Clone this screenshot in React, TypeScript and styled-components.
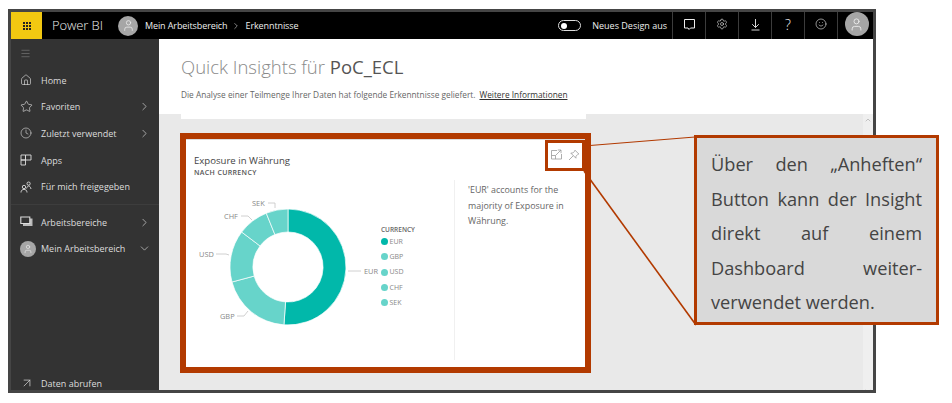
import React from 'react';
import styled, { createGlobalStyle } from 'styled-components';
import { ChevronDown, ChevronRight, ChevronUp, Clock, House, Menu, Settings, Smile, Star, User, ArrowUpRight } from 'lucide-react';

const RED = '#b23a00';
const FONT = '"Open Sans", "Noto Sans", "Liberation Sans", sans-serif';

const GlobalStyle = createGlobalStyle`
  html, body {
    margin: 0;
    background: #fff;
    font-family: ${FONT};
  }
  * { box-sizing: border-box; }
`;

const Page = styled.div`
  position: relative;
  width: 952px;
  height: 403px;
  padding: 9px 0 0 8px;
  overflow: hidden;
`;

const Window = styled.div`
  width: 868px;
  height: 384px;
  border: 3px solid #454545;
  display: flex;
  flex-direction: column;
`;

const TopBar = styled.header`
  height: 27px;
  background: #000;
  color: #eee;
  display: flex;
  align-items: stretch;
  flex-shrink: 0;
`;

const AppTile = styled.div`
  width: 31px;
  background: #f2c811;
  display: grid;
  place-items: center;
`;

const Waffle = styled.div`
  display: grid;
  grid-template-columns: repeat(3, 2px);
  gap: 1px;
  span { width: 2px; height: 2px; background: #222; }
`;

const Brand = styled.div`
  margin-left: 10px;
  width: 50px;
  font-size: 13px;
  font-weight: 300;
  line-height: 26px;
  letter-spacing: -0.1px;
  white-space: nowrap;
`;

const Avatar = styled.div<{ $size: number }>`
  width: ${(p) => p.$size}px;
  height: ${(p) => p.$size}px;
  border-radius: 50%;
  background: #a6a6a6;
  color: #eee;
  display: grid;
  place-items: center;
  flex-shrink: 0;
`;

const Crumbs = styled.div`
  margin-left: 16px;
  display: flex;
  align-items: center;
  gap: 4px;
  font-size: 9px;
  white-space: nowrap;
  letter-spacing: -0.1px;
  flex: 1;
`;

const CrumbWorkspace = styled.div`
  display: flex;
  align-items: center;
  gap: 7px;
`;

const DesignToggle = styled.div`
  display: flex;
  align-items: center;
  gap: 11px;
  margin-right: 5px;
  font-size: 9px;
  white-space: nowrap;
`;

const ToggleTrack = styled.div`
  width: 23px;
  height: 11px;
  border: 1px solid #ddd;
  border-radius: 6px;
  padding: 1.5px;
  span { display: block; width: 6px; height: 6px; border-radius: 50%; background: #fff; }
`;

const BarCell = styled.div`
  width: 33px;
  border-left: 1px solid #3c3c3c;
  display: grid;
  place-items: center;
  color: #eee;
  padding-bottom: 3px;
  font-size: 14px;
  font-weight: 300;
`;

const UserCell = styled(BarCell)`
  width: 36px;
  align-content: start;
  padding-left: 2px;
  padding-bottom: 0;
`;

const Body = styled.div`
  flex: 1;
  display: flex;
  min-height: 0;
`;

const Sidebar = styled.nav`
  width: 148px;
  background: #333;
  color: #ddd;
  display: flex;
  flex-direction: column;
  font-size: 9px;
  flex-shrink: 0;
`;

const MenuToggle = styled.div`
  height: 28px;
  padding: 1px 0 0 9px;
  display: flex;
  align-items: center;
  color: #999;
`;

const NavRow = styled.div`
  height: 26.6px;
  display: flex;
  align-items: center;
  padding-left: 9px;
  padding-right: 8px;
  white-space: nowrap;
`;

const NavIcon = styled.span`
  width: 21px;
  display: flex;
  align-items: center;
  flex-shrink: 0;
`;

const NavLabel = styled.span`
  flex: 1;
`;

const NavDivider = styled.div`
  height: 1px;
  background: #3d3d3d;
  margin: 4px 0 4px;
`;

const NavSpacer = styled.div`
  flex: 1;
`;

const BottomRow = styled(NavRow)`
  height: 14px;
`;

const Main = styled.main`
  flex: 1;
  display: flex;
  flex-direction: column;
  min-width: 0;
`;

const InsightHeader = styled.section`
  height: 75px;
  background: #fff;
  padding: 14px 0 0 22px;
  flex-shrink: 0;
`;

const Title = styled.h1`
  margin: 0;
  font-size: 18.5px;
  font-weight: 300;
  line-height: 28px;
  color: #8a8a8a;
  white-space: nowrap;
  strong { font-weight: 400; color: #555; }
`;

const Subtitle = styled.p`
  margin: 8px 0 0;
  font-size: 8.3px;
  line-height: 11px;
  color: #666;
  white-space: nowrap;
  a { margin-left: 4px; color: #333; text-decoration: underline; }
`;

const Workspace = styled.div`
  flex: 1;
  display: flex;
  background: #e9e9e9;
  min-height: 0;
`;

const CardArea = styled.div`
  flex: 1;
`;

const Strip = styled.div`
  width: 405px;
  height: 5px;
  margin-left: 22px;
  background: #fff;
`;

const Card = styled.article`
  position: relative;
  width: 411px;
  height: 240px;
  margin: 14px 0 0 21px;
  border: 6px solid ${RED};
  background: #fff;
  display: flex;
  box-shadow: inset 0 1px 0 #ddd;
`;

const ChartPane = styled.div`
  width: 268px;
  padding: 15px 0 0 8px;
`;

const CardTitle = styled.h2`
  margin: 0;
  font-size: 9.6px;
  font-weight: 400;
  line-height: 13px;
  color: #444;
  white-space: nowrap;
`;

const CardSub = styled.div`
  margin-top: 1px;
  font-size: 7px;
  font-weight: 600;
  line-height: 9px;
  letter-spacing: 0.35px;
  color: #555;
`;

const ChartRow = styled.div`
  display: flex;
  align-items: flex-start;
  margin: -5px 0 0 -8px;
`;

const Legend = styled.div`
  margin: 54px 0 0 -7px;
  font-size: 7px;
  line-height: 15.2px;
  color: #888;
`;

const LegendTitle = styled.div`
  font-weight: 600;
  font-size: 6.5px;
  line-height: 8px;
  color: #666;
`;

const LegendItem = styled.div`
  display: flex;
  align-items: center;
  gap: 1.5px;
`;

const LegendDot = styled.span<{ $color: string }>`
  width: 7px;
  height: 7px;
  border-radius: 50%;
  background: ${(p) => p.$color};
`;

const NotePane = styled.div`
  margin-top: 41px;
  height: 180px;
  border-left: 1px solid #f0f0f0;
  padding: 2px 0 0 13px;
  font-size: 8.9px;
  line-height: 15.5px;
  color: #666;
  width: 128px;
`;

const NoteText = styled.p`
  margin: 0;
`;

const ActionBox = styled.div`
  position: absolute;
  left: 359px;
  top: 1px;
  width: 40px;
  height: 31px;
  border: 3px solid ${RED};
  display: flex;
  align-items: center;
  justify-content: center;
  gap: 6px;
  color: #999;
  padding-bottom: 2px;
`;

const Scrollbar = styled.div`
  width: 10px;
  background: #efefef;
  color: #999;
  display: flex;
  flex-direction: column;
  align-items: center;
  justify-content: space-between;
  padding-top: 2px;
  overflow: hidden;
`;

const Callout = styled.aside`
  position: absolute;
  left: 694px;
  top: 135px;
  width: 245px;
  height: 190px;
  border: 3px solid ${RED};
  background: #d9d9d9;
  color: #444;
  padding: 9px 14px 0;
  font-size: 18.2px;
  line-height: 34.5px;
`;

const CalloutLine = styled.div<{ $last?: boolean }>`
  text-align: justify;
  text-align-last: ${(p) => (p.$last ? 'left' : 'justify')};
`;

const Leaders = styled.svg`
  position: absolute;
  left: 0;
  top: 0;
  pointer-events: none;
`;

const slices = [
  { name: 'EUR', from: 0, to: 184, color: '#01b8aa' },
  { name: 'GBP', from: 184, to: 255, color: '#67d4ca' },
  { name: 'USD', from: 255, to: 307, color: '#67d4ca' },
  { name: 'CHF', from: 307, to: 338, color: '#67d4ca' },
  { name: 'SEK', from: 338, to: 360, color: '#67d4ca' },
];

const polar = (r: number, deg: number) => {
  const a = ((deg - 90) * Math.PI) / 180;
  return `${(100 + r * Math.cos(a)).toFixed(2)} ${(95 + r * Math.sin(a)).toFixed(2)}`;
};

const slicePath = (from: number, to: number) => {
  const large = to - from > 180 ? 1 : 0;
  return `M${polar(58, from)} A58 58 0 ${large} 1 ${polar(58, to)} L${polar(35, to)} A35 35 0 ${large} 0 ${polar(35, from)} Z`;
};

const Donut = () => (
  <svg width="200" height="190" viewBox="0 0 200 190" style={{ flexShrink: 0, marginLeft: 2 }}>
    {slices.map((s) => (
      <path key={s.name} d={slicePath(s.from, s.to)} fill={s.color} stroke="#fff" strokeWidth="0.7" />
    ))}
    <g fill="none" stroke="#c4c4c4" strokeWidth="0.8">
      <path d="M160 99H173" />
      <path d="M80 31H87V36" />
      <path d="M53 44H60L64 48" />
      <path d="M28 82H38L41 83" />
      <path d="M49 144H56L60 139" />
    </g>
    <g fontSize="7.4" fill="#888" fontFamily={FONT}>
      <text x="176" y="102">EUR</text>
      <text x="64" y="34">SEK</text>
      <text x="36" y="47">CHF</text>
      <text x="11" y="85">USD</text>
      <text x="32" y="147">GBP</text>
    </g>
  </svg>
);

// icons lucide has no close match for
const ChatIcon = () => (
  <svg width="13" height="13" viewBox="0 0 13 13" fill="none" stroke="currentColor" strokeWidth="1">
    <path d="M1.5 1.5H11.5V10H7.5L6 11.5L5 10H1.5Z" />
  </svg>
);

const DownloadIcon = () => (
  <svg width="11" height="13" viewBox="0 0 11 13" fill="none" stroke="currentColor" strokeWidth="0.9">
    <path d="M5.5 1V9.5M2.2 6.2L5.5 9.5L8.8 6.2M1.5 12H9.5" />
  </svg>
);

const AppsIcon = () => (
  <svg width="12" height="12" viewBox="0 0 12 12" fill="none" stroke="currentColor" strokeWidth="0.9">
    <path d="M1 1H5.5V6H1ZM5.5 1H11V6H5.5ZM1 6H5.5V11H1Z" />
  </svg>
);

const SharedIcon = () => (
  <svg width="12" height="12" viewBox="0 0 12 12" fill="none" stroke="currentColor" strokeWidth="0.9">
    <circle cx="4" cy="6" r="1.7" />
    <path d="M1 11.5C1 9.5 2.3 8.4 4 8.4S7 9.5 7 11.5" />
    <circle cx="8.6" cy="2.6" r="1.6" />
    <path d="M6.6 7.5C7 6 7.6 5 8.6 5S10.6 6 11 8" />
  </svg>
);

const WorkspacesIcon = () => (
  <svg width="13" height="12" viewBox="0 0 13 12">
    <path d="M3 2.5H12.5V10H3Z" fill="#bbb" />
    <path d="M.8 1H9.8V7.5H.8Z" fill="#333" stroke="#ddd" strokeWidth="1.1" />
  </svg>
);

const ExpandInsightIcon = () => (
  <svg width="11" height="11" viewBox="0 0 11 11" fill="none" stroke="currentColor" strokeWidth="0.8">
    <path d="M6 1.5H.5V10H10.5V5" />
    <path d="M4.5 6.5L10 1M6.8 1H10V4.2" />
    <path d="M.5 6.5H4.5V10" />
  </svg>
);

const PinIcon = () => (
  <svg width="12" height="12" viewBox="0 0 12 12" fill="none" stroke="currentColor" strokeWidth="0.8">
    <path d="M7 1.2L10.8 5L9.8 5.4L8 7.2L7.9 9.2L2.8 4.1L4.8 4L6.6 2.2Z" />
    <path d="M5.3 6.7L1 11" />
  </svg>
);

const navItems = [
  { label: 'Home', icon: <House size={12} strokeWidth={1.3} /> },
  { label: 'Favoriten', icon: <Star size={13} strokeWidth={1.2} />, more: true },
  { label: 'Zuletzt verwendet', icon: <Clock size={12} strokeWidth={1.2} />, more: true },
  { label: 'Apps', icon: <AppsIcon /> },
  { label: 'Für mich freigegeben', icon: <SharedIcon /> },
];

const App: React.FC = () => {
  return (
    <Page>
      <GlobalStyle />
      <Window>
        <TopBar>
          <AppTile>
            <Waffle>
              {Array.from({ length: 9 }, (_, i) => (
                <span key={i} />
              ))}
            </Waffle>
          </AppTile>
          <Brand>Power BI</Brand>
          <Crumbs>
            <CrumbWorkspace>
              <Avatar $size={20}>
                <User size={13} strokeWidth={1.4} />
              </Avatar>
              Mein Arbeitsbereich
            </CrumbWorkspace>
            <ChevronRight size={10} strokeWidth={1.3} />
            Erkenntnisse
          </Crumbs>
          <DesignToggle>
            <ToggleTrack>
              <span />
            </ToggleTrack>
            Neues Design aus
          </DesignToggle>
          <BarCell>
            <ChatIcon />
          </BarCell>
          <BarCell>
            <Settings size={12} strokeWidth={1.2} />
          </BarCell>
          <BarCell>
            <DownloadIcon />
          </BarCell>
          <BarCell>?</BarCell>
          <BarCell>
            <Smile size={12} strokeWidth={1.2} />
          </BarCell>
          <UserCell>
            <Avatar $size={24}>
              <User size={15} strokeWidth={1.4} />
            </Avatar>
          </UserCell>
        </TopBar>
        <Body>
          <Sidebar>
            <MenuToggle>
              <Menu size={11} strokeWidth={1} />
            </MenuToggle>
            {navItems.map((item) => (
              <NavRow key={item.label}>
                <NavIcon>{item.icon}</NavIcon>
                <NavLabel>{item.label}</NavLabel>
                {item.more && <ChevronRight size={13} strokeWidth={1.2} />}
              </NavRow>
            ))}
            <NavDivider />
            <NavRow>
              <NavIcon>
                <WorkspacesIcon />
              </NavIcon>
              <NavLabel>Arbeitsbereiche</NavLabel>
              <ChevronRight size={13} strokeWidth={1.2} />
            </NavRow>
            <NavRow>
              <NavIcon>
                <Avatar $size={16}>
                  <User size={10} strokeWidth={1.5} />
                </Avatar>
              </NavIcon>
              <NavLabel>Mein Arbeitsbereich</NavLabel>
              <ChevronDown size={13} strokeWidth={1.2} />
            </NavRow>
            <NavSpacer />
            <BottomRow>
              <NavIcon>
                <ArrowUpRight size={14} strokeWidth={1.2} />
              </NavIcon>
              <NavLabel>Daten abrufen</NavLabel>
            </BottomRow>
          </Sidebar>
          <Main>
            <InsightHeader>
              <Title>
                Quick Insights für <strong>PoC_ECL</strong>
              </Title>
              <Subtitle>
                Die Analyse einer Teilmenge Ihrer Daten hat folgende Erkenntnisse geliefert.
                <a>Weitere Informationen</a>
              </Subtitle>
            </InsightHeader>
            <Workspace>
              <CardArea>
                <Strip />
                <Card>
                  <ChartPane>
                    <CardTitle>Exposure in Währung</CardTitle>
                    <CardSub>NACH CURRENCY</CardSub>
                    <ChartRow>
                      <Donut />
                      <Legend>
                        <LegendTitle>CURRENCY</LegendTitle>
                        {slices.map((s) => (
                          <LegendItem key={s.name}>
                            <LegendDot $color={s.color} />
                            {s.name}
                          </LegendItem>
                        ))}
                      </Legend>
                    </ChartRow>
                  </ChartPane>
                  <NotePane>
                    <NoteText>'EUR' accounts for the majority of Exposure in Währung.</NoteText>
                  </NotePane>
                  <ActionBox>
                    <ExpandInsightIcon />
                    <PinIcon />
                  </ActionBox>
                </Card>
              </CardArea>
              <Scrollbar>
                <ChevronUp size={8} strokeWidth={1.6} />
                <ChevronDown size={8} strokeWidth={1.6} style={{ marginBottom: -5 }} />
              </Scrollbar>
            </Workspace>
          </Main>
        </Body>
      </Window>
      <Leaders width="952" height="403">
        <path d="M590 145.5L695 137" stroke={RED} strokeWidth="1.1" fill="none" />
        <path d="M584 171L696 325" stroke={RED} strokeWidth="1.6" fill="none" />
      </Leaders>
      <Callout>
        <CalloutLine>Über den „Anheften“</CalloutLine>
        <CalloutLine>Button kann der Insight</CalloutLine>
        <CalloutLine>direkt auf einem</CalloutLine>
        <CalloutLine>Dashboard weiter-</CalloutLine>
        <CalloutLine $last>verwendet werden.</CalloutLine>
      </Callout>
    </Page>
  );
};

export default App;
